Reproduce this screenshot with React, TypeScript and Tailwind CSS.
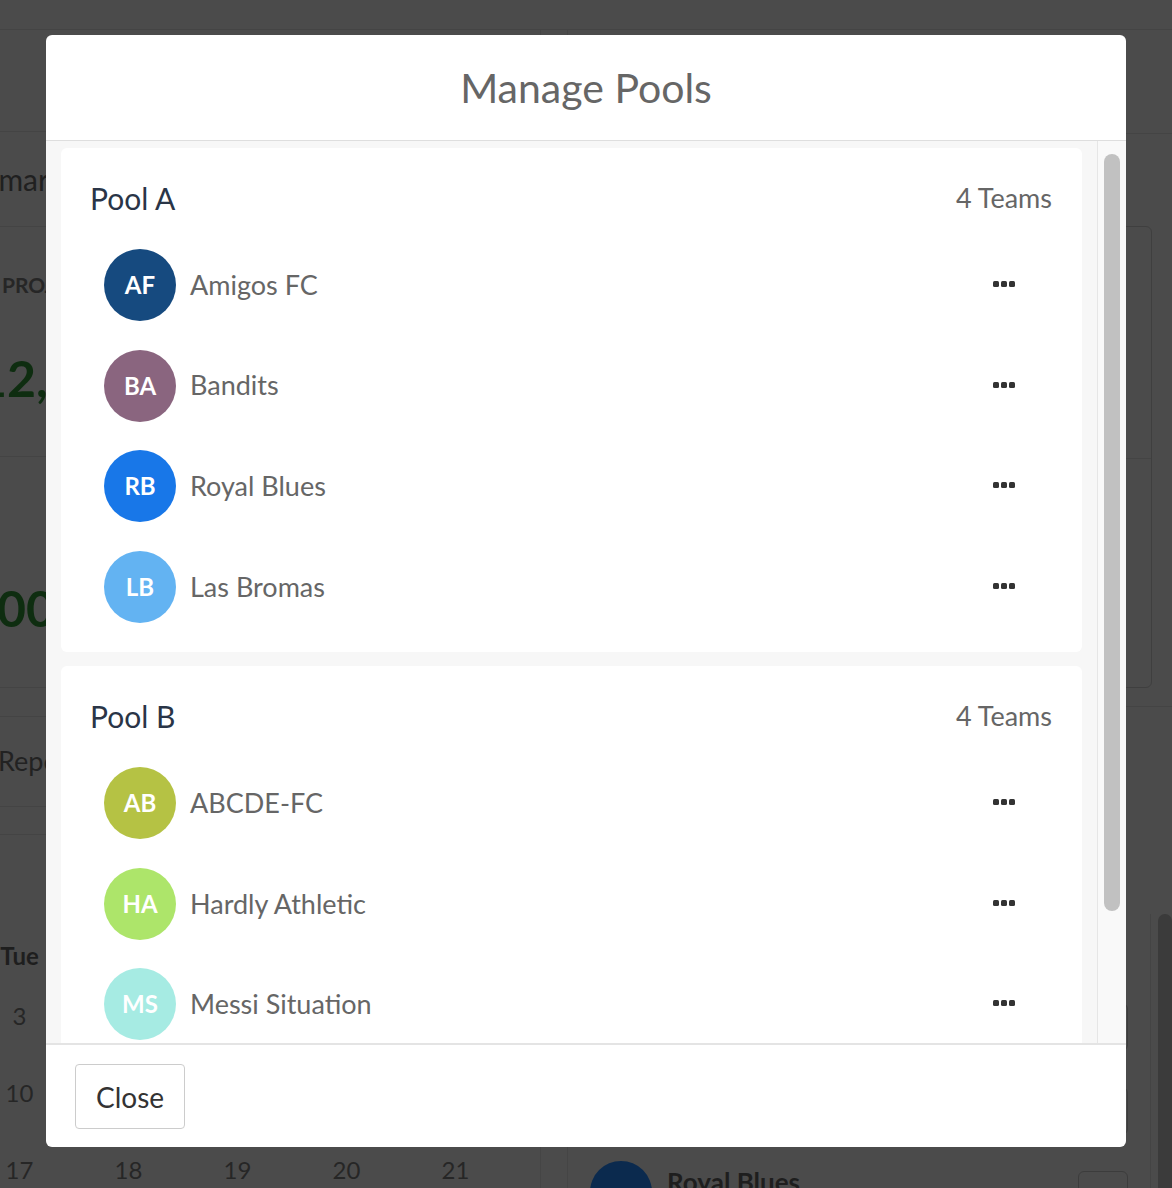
import React from "react";

type Team = { initials: string; name: string; color: string };

const pools: { name: string; teams: Team[] }[] = [
  {
    name: "Pool A",
    teams: [
      { initials: "AF", name: "Amigos FC", color: "bg-[#164a7f]" },
      { initials: "BA", name: "Bandits", color: "bg-[#8a657f]" },
      { initials: "RB", name: "Royal Blues", color: "bg-[#1877e8]" },
      { initials: "LB", name: "Las Bromas", color: "bg-[#63b3f2]" },
    ],
  },
  {
    name: "Pool B",
    teams: [
      { initials: "AB", name: "ABCDE-FC", color: "bg-[#b5c244]" },
      { initials: "HA", name: "Hardly Athletic", color: "bg-[#ade56a]" },
      { initials: "MS", name: "Messi Situation", color: "bg-[#a6ebe3]" },
      { initials: "SS", name: "Sunday Strikers", color: "bg-[#f0a35e]" },
    ],
  },
];

function Dots() {
  return (
    <button className="flex items-center gap-[2px] p-0" aria-label="Team options">
      <span className="h-[6px] w-[6px] rounded-[1.5px] bg-[#333]" />
      <span className="h-[6px] w-[6px] rounded-[1.5px] bg-[#333]" />
      <span className="h-[6px] w-[6px] rounded-[1.5px] bg-[#333]" />
    </button>
  );
}

function PoolCard({ name, teams }: { name: string; teams: Team[] }) {
  return (
    <div className="shrink-0 rounded-md bg-white pb-[29px]">
      {/* Pool header */}
      <div className="flex h-[68px] items-end justify-between pl-[29px] pr-[30px]">
        <h3 className="text-[30px] leading-[36px] text-[#2a3547]">{name}</h3>
        <span className="text-[27px] leading-[36px] text-[#666]">{teams.length} Teams</span>
      </div>

      {/* Team rows */}
      <ul className="mt-[33px] flex flex-col gap-[28.7px] pl-[43px] pr-[67px]">
        {teams.map((t) => (
          <li key={t.initials} className="flex h-[72px] items-center">
            <div
              className={`flex h-[72px] w-[72px] shrink-0 items-center justify-center rounded-full ${t.color} text-[24px] font-bold text-white`}
            >
              {t.initials}
            </div>
            <span className="ml-[14px] flex-1 text-[27px] text-[#666]">{t.name}</span>
            <div className="-mt-[2px]">
              <Dots />
            </div>
          </li>
        ))}
      </ul>
    </div>
  );
}

export default function App() {
  const calRows = [
    ["Tue", "Wed", "Thu", "Fri", "Sat"],
    ["3", "4", "5", "6", "7"],
    ["10", "11", "12", "13", "14"],
    ["17", "18", "19", "20", "21"],
  ];

  return (
    <div className="relative h-[1188px] overflow-hidden bg-[#4b4b4b] font-['Lato',sans-serif]">
      {/* Dimmed page behind the modal */}
      <div className="h-[30px] border-b border-[#444]" />
      <div className="flex">
        {/* Left column */}
        <div className="w-[541px] shrink-0 border-r border-[#454545]">
          <div className="h-[102px] border-b border-[#444]" />
          <div className="flex h-[95px] items-center border-b border-[#444]">
            <span className="-ml-[59px] text-[30px] text-[#202020]">Summary</span>
          </div>
          <div className="h-[230px] border-b border-[#444] pt-[46px]">
            <div className="ml-[2px] text-[21px] font-bold leading-[24px] text-[#262626]">PROJECTED</div>
            <div className="-ml-[22px] mt-[53px] text-[50px] font-bold leading-[56px] text-[#0e2d10]">12,500</div>
          </div>
          <div className="h-[231px] border-b border-[#444] pt-[123px]">
            <div className="-ml-[32px] text-[50px] font-bold leading-[56px] text-[#0e2d10]">300</div>
          </div>
          <div className="h-[29px] border-b border-[#444]" />
          <div className="flex h-[90px] items-center border-b border-[#444]">
            <span className="-ml-[2px] text-[27px] text-[#222]">Reports</span>
          </div>
          <div className="h-[28px] border-b border-[#444]" />
          <div className="-ml-[35px] flex flex-col pt-[106px]">
            {calRows.map((row, i) => (
              <div
                key={i}
                className={`grid grid-cols-[repeat(5,109px)] text-center text-[24px] leading-[30px] ${
                  i === 0 ? "mb-[30px] font-bold text-[#1e1e1e]" : "mb-[47px] text-[#262626]"
                }`}
              >
                {row.map((c) => (
                  <span key={c}>{c}</span>
                ))}
              </div>
            ))}
          </div>
        </div>

        {/* Right column */}
        <div className="ml-[26px] flex-1 border-l border-[#454545] pl-[22px]">
          <div className="-ml-[22px] h-[104px] border-b border-[#444]" />
          <div className="mr-[20px] mt-[92px] h-[462px] rounded-md border border-[#3f3f3f]">
            <div className="h-[232px] border-b border-[#444]" />
          </div>
          <div className="-ml-[22px] mt-[18px] border-b border-[#444]" />
          <div className="mt-[207px] flex">
            <div className="flex-1 border-r border-[#444] pt-[79px]">
              {["Amigos FC", "Bandits", "Royal Blues"].map((n) => (
                <div key={n} className="flex h-[84px] items-start pr-[22px]">
                  <div className="h-[62px] w-[62px] shrink-0 rounded-full bg-[#0b2a4e]" />
                  <span className="ml-[15px] mt-[2px] flex-1 text-[26px] font-bold text-[#1e1e1e]">{n}</span>
                  <div className="mt-[10px] h-[48px] w-[50px] rounded-md border border-[#3c3c3c]" />
                </div>
              ))}
            </div>
            <div className="ml-[7px] h-[300px] w-[14px] rounded-t-full bg-[#3b3b3b]" />
          </div>
        </div>
      </div>

      {/* Modal */}
      <div className="absolute left-[46px] top-[35px] flex h-[1112px] w-[1080px] flex-col overflow-hidden rounded-[6px] bg-white">
        <div className="flex h-[106px] shrink-0 items-center justify-center border-b border-[#dedede]">
          <h2 className="text-[41px] text-[#666]">Manage Pools</h2>
        </div>

        <div className="flex min-h-0 flex-1 bg-[#f7f7f7]">
          <div className="flex min-w-0 flex-1 flex-col gap-[14px] overflow-hidden pl-[15px] pr-[15px] pt-[7px]">
            {pools.map((p) => (
              <PoolCard key={p.name} name={p.name} teams={p.teams} />
            ))}
          </div>
          {/* Scrollbar */}
          <div className="w-[29px] shrink-0 border-l border-[#e6e6e6] bg-[#f9f9f9] pl-[6px]">
            <div className="mt-[13px] h-[757px] w-[16px] rounded-full bg-[#c1c1c1]" />
          </div>
        </div>

        <div className="flex h-[104px] shrink-0 items-start border-t-2 border-[#e4e4e4] pl-[29px] pt-[19px]">
          <button className="h-[65px] w-[110px] rounded-[4px] border border-[#cccccc] bg-white text-[28px] text-[#333]">
            Close
          </button>
        </div>
      </div>
    </div>
  );
}
